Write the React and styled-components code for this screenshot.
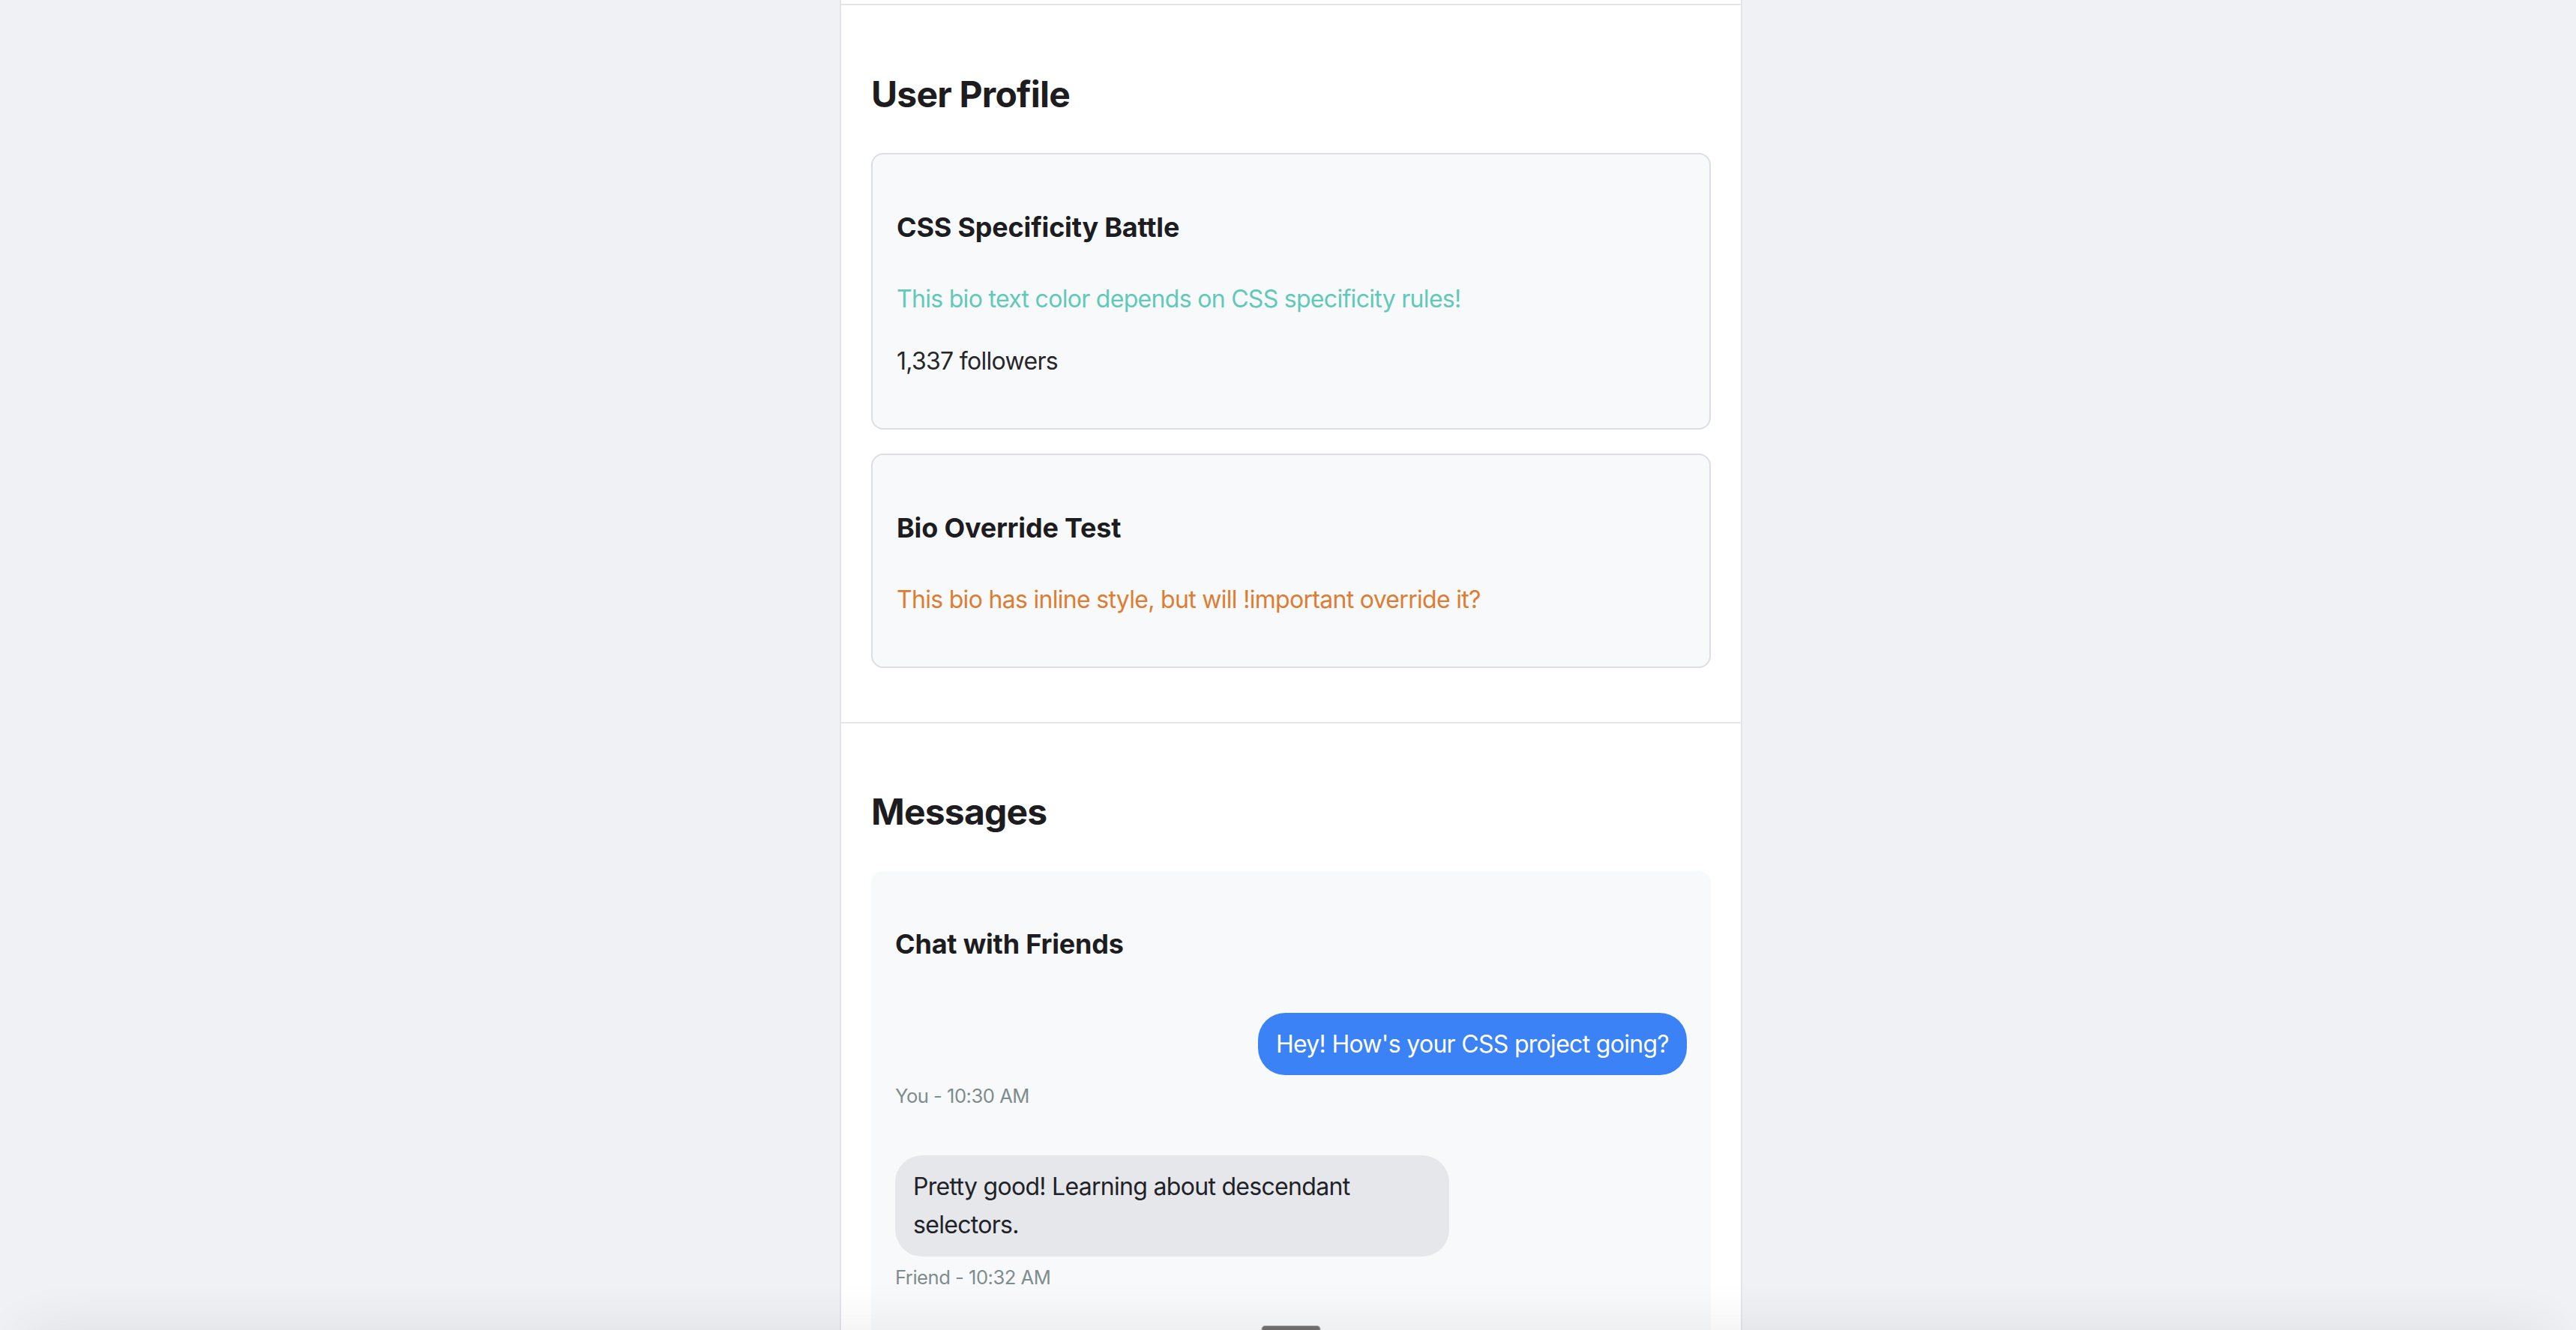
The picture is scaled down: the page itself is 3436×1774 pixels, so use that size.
import React from 'react';
import styled, { createGlobalStyle } from 'styled-components';

const GlobalStyle = createGlobalStyle`
  html, body {
    margin: 0;
    padding: 0;
    background: #f0f1f5;
    font-family: "Inter", "Liberation Sans", sans-serif;
    color: #1d1d1f;
  }
  * { box-sizing: border-box; }
`;

const Page = styled.div`
  display: flex;
  justify-content: center;
  padding-left: 8px;
  min-height: 100vh;
`;

const Panel = styled.main`
  width: 1204px;
  background: #ffffff;
  border-left: 2px solid #e4e5ea;
  border-right: 2px solid #e4e5ea;
`;

const Section = styled.section`
  padding: ${p => (p.$stub ? '0' : '40px')};
  height: ${p => (p.$stub ? '7px' : 'auto')};
  border-bottom: 2px solid #e4e5ea;
`;

const Heading = styled.h2`
  margin: 49.5px 0;
  font-size: 48px;
  line-height: 58px;
  font-weight: 700;
  color: #1d1d1f;
  letter-spacing: -0.8px;
`;

const Card = styled.div`
  background: #f8f9fb;
  border: 2px solid #dddee3;
  border-radius: 16px;
  padding: 32px;
  margin-bottom: 32px;
`;

const CardTitle = styled.h3`
  margin: 37px 0 40px;
  font-size: 36px;
  line-height: 57.6px;
  font-weight: 700;
  color: #1d1d1f;
  letter-spacing: -0.2px;
`;

const Bio = styled.p`
  margin: 0 0 32px;
  font-size: 32px;
  line-height: 51.2px;
  letter-spacing: -0.7px;
  color: ${p => p.$tone};
`;

const Followers = styled.p`
  margin: 0 0 32px;
  font-size: 32px;
  line-height: 51.2px;
  letter-spacing: -0.7px;
  color: #27272a;
`;

const Chat = styled.div`
  background: #f8f9fb;
  border-radius: 16px;
  padding: 32px 32px 64px;
`;

const ChatTitle = styled.h3`
  margin: 37px 0 62.7px;
  font-size: 36px;
  line-height: 57.6px;
  font-weight: 700;
  color: #1d1d1f;
  letter-spacing: -0.2px;
`;

const MessageList = styled.div`
  display: flex;
  flex-direction: column;
  gap: 59px;
`;

const Message = styled.div`
  display: flex;
  flex-direction: column;
  align-items: flex-start;
`;

const Bubble = styled.div`
  align-self: ${p => (p.$mine ? 'flex-end' : 'flex-start')};
  max-width: 70%;
  padding: 16px 24px;
  border-radius: 36px;
  font-size: 32px;
  line-height: 51.2px;
  letter-spacing: -0.7px;
  background: ${p => (p.$mine ? '#3b82f6' : '#e5e7eb')};
  color: ${p => (p.$mine ? '#ffffff' : '#1f2328')};
`;

const Time = styled.span`
  margin-top: 7px;
  font-size: 25.6px;
  line-height: 41px;
  letter-spacing: -0.5px;
  color: #7f8c8d;
`;

const BottomShade = styled.div`
  position: fixed;
  left: 30px;
  right: 30px;
  bottom: -80px;
  height: 80px;
  border-radius: 60px;
  box-shadow: 0 0 70px 6px rgba(0, 0, 0, 0.07);
  pointer-events: none;
`;

const Handle = styled.div`
  position: fixed;
  bottom: -4px;
  left: calc(50% + 4px);
  transform: translateX(-50%);
  width: 79px;
  height: 10px;
  background: #6d6d6d;
  border: 1px solid #a5a5a5;
  border-radius: 6px;
`;

const messages = [
  { mine: true, text: "Hey! How's your CSS project going?", meta: 'You - 10:30 AM' },
  { mine: false, text: 'Pretty good! Learning about descendant selectors.', meta: 'Friend - 10:32 AM' },
];

export default function App() {
  return (
    <>
      <GlobalStyle />
      <Page>
        <Panel>
          <Section $stub />
          <Section>
            <Heading>User Profile</Heading>
            <Card>
              <CardTitle>CSS Specificity Battle</CardTitle>
              <Bio $tone="#62c9b9">This bio text color depends on CSS specificity rules!</Bio>
              <Followers>1,337 followers</Followers>
            </Card>
            <Card>
              <CardTitle>Bio Override Test</CardTitle>
              <Bio $tone="#de7d32">This bio has inline style, but will !important override it?</Bio>
            </Card>
          </Section>
          <Section>
            <Heading>Messages</Heading>
            <Chat>
              <ChatTitle>Chat with Friends</ChatTitle>
              <MessageList>
                {messages.map((m, i) => (
                  <Message key={i}>
                    <Bubble $mine={m.mine}>{m.text}</Bubble>
                    <Time>{m.meta}</Time>
                  </Message>
                ))}
              </MessageList>
            </Chat>
          </Section>
        </Panel>
      </Page>
      <BottomShade />
      <Handle />
    </>
  );
}
